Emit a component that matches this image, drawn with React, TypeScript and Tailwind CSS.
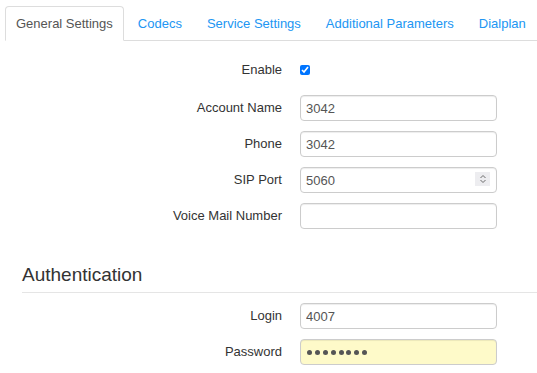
import React from "react";

const font = { fontFamily: '"Liberation Sans", Arial, sans-serif' };

function Tab({ label, active }: { label: string; active?: boolean }) {
  return (
    <li className="mr-[3px] -mb-px shrink-0">
      <a
        className={
          "block whitespace-nowrap px-[10px] py-[10px] text-[13px] leading-[13px] border rounded-t-[4px] " +
          (active
            ? "border-[#dddddd] border-b-white bg-white text-[#555555]"
            : "border-transparent text-[#2196f3]")
        }
      >
        {label}
      </a>
    </li>
  );
}

const inputCls =
  "w-[197px] h-[26px] border border-[#cccccc] rounded-[4px] px-[5px] text-[13px] text-[#555555] outline-none shadow-[inset_0_1px_1px_rgba(0,0,0,0.075)]";

function Row({ label, children }: { label: string; children: React.ReactNode }) {
  return (
    <div className="flex items-center h-[26px]">
      <div className="w-[282px] text-right text-[13px] text-[#333333]">{label}</div>
      <div className="ml-[18px]">{children}</div>
    </div>
  );
}

export default function App() {
  const dots = [0, 1, 2, 3, 4, 5, 6, 7];
  return (
    <div className="w-[537px] h-[373px] bg-white overflow-hidden" style={font}>
      <ul className="flex flex-nowrap mt-[6px] ml-[5px] border-b border-[#dddddd] overflow-visible">
        <Tab label="General Settings" active />
        <Tab label="Codecs" />
        <Tab label="Service Settings" />
        <Tab label="Additional Parameters" />
        <Tab label="Dialplan" />
      </ul>

      <div className="flex flex-col">
        <div className="flex items-center h-[20px] mt-[19px]">
          <div className="w-[282px] text-right text-[13px] text-[#333333]">Enable</div>
          <div className="ml-[18px] flex items-center">
            <input
              type="checkbox"
              defaultChecked
              className="m-0 w-[10px] h-[10px] accent-[#0075ff]"
            />
          </div>
        </div>

        <div className="flex flex-col gap-[10px] mt-[15px]">
          <Row label="Account Name">
            <input className={inputCls} defaultValue="3042" style={font} />
          </Row>
          <Row label="Phone">
            <input className={inputCls} defaultValue="3042" style={font} />
          </Row>
          <Row label="SIP Port">
            <div className="relative">
              <input className={inputCls} defaultValue="5060" style={font} />
              <div className="absolute right-[7px] top-[5px] w-[15px] h-[14px] bg-[#ededf0] flex items-center justify-center">
                <svg width="8" height="10" viewBox="0 0 8 10" fill="none" stroke="#6b6b6b" strokeWidth="1">
                  <path d="M1.5 4 L4 1.5 L6.5 4" />
                  <path d="M1.5 6 L4 8.5 L6.5 6" />
                </svg>
              </div>
            </div>
          </Row>
          <Row label="Voice Mail Number">
            <input className={inputCls} defaultValue="" style={font} />
          </Row>
        </div>

        <div className="ml-[22px] mt-[35px] pb-[7px] border-b border-[#e5e5e5]">
          <h3 className="text-[19px] leading-[21px] text-[#333333]">Authentication</h3>
        </div>

        <div className="flex flex-col gap-[10px] mt-[10px]">
          <Row label="Login">
            <input className={inputCls} defaultValue="4007" style={font} />
          </Row>
          <Row label="Password">
            <div
              role="textbox"
              aria-label="Password"
              className={inputCls + " bg-[#fefac9] flex items-center gap-[2.9px] pl-[6px]"}
            >
              {dots.map((d) => (
                <span key={d} className="block w-[5px] h-[5px] rounded-full bg-[#555555]" />
              ))}
            </div>
          </Row>
        </div>
      </div>
    </div>
  );
}
